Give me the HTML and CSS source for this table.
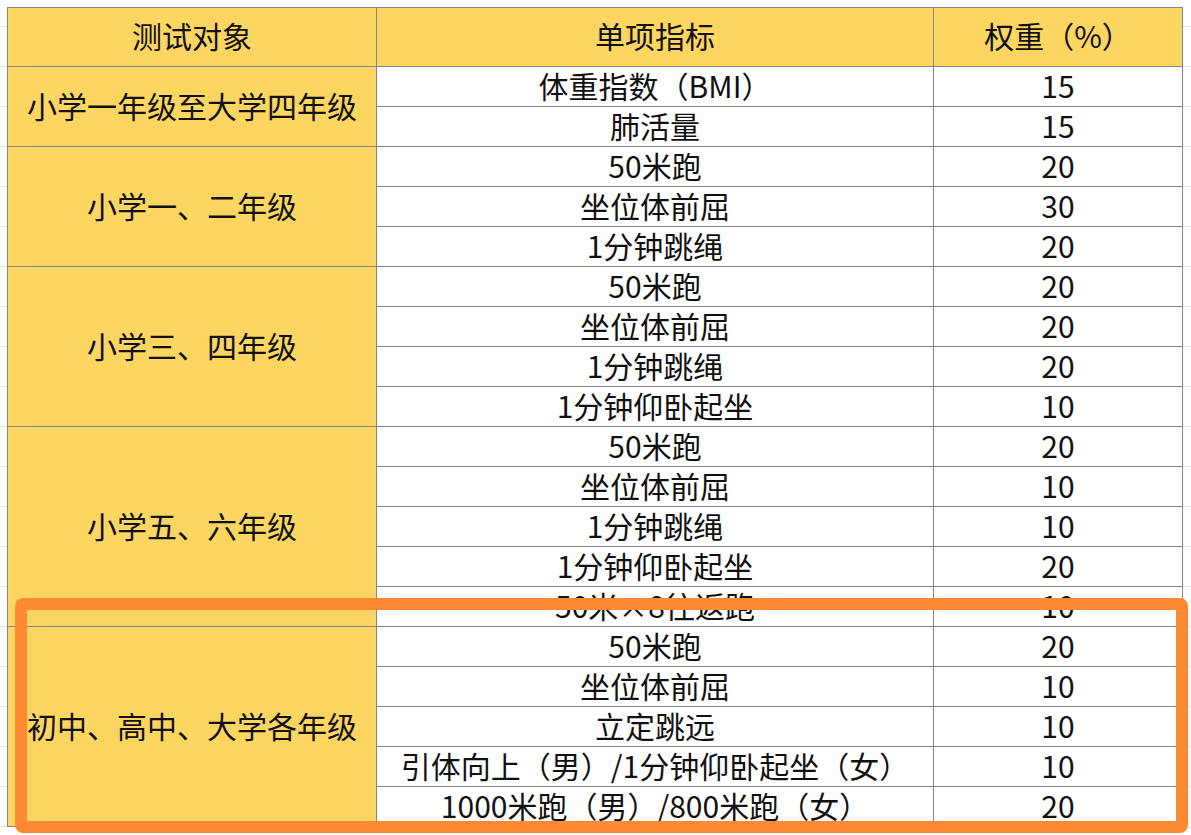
FILE: index.html
```html
<!DOCTYPE html>
<html lang="zh">
<head>
<meta charset="utf-8">
<title>体测指标权重</title>
<link rel="stylesheet" href="styles.css">
</head>
<body>
<div class="sheet">
  <table class="grid">
    <colgroup>
      <col class="c1">
      <col class="c2">
      <col class="c3">
    </colgroup>
    <thead>
      <tr class="head">
        <th>测试对象</th>
        <th>单项指标</th>
        <th>权重（%）</th>
      </tr>
    </thead>
    <tbody>
      <tr><td class="group" rowspan="2">小学一年级至大学四年级</td><td>体重指数（BMI）</td><td>15</td></tr>
      <tr><td>肺活量</td><td>15</td></tr>

      <tr><td class="group" rowspan="3">小学一、二年级</td><td>50米跑</td><td>20</td></tr>
      <tr><td>坐位体前屈</td><td>30</td></tr>
      <tr><td>1分钟跳绳</td><td>20</td></tr>

      <tr><td class="group" rowspan="4">小学三、四年级</td><td>50米跑</td><td>20</td></tr>
      <tr><td>坐位体前屈</td><td>20</td></tr>
      <tr><td>1分钟跳绳</td><td>20</td></tr>
      <tr><td>1分钟仰卧起坐</td><td>10</td></tr>

      <tr><td class="group" rowspan="5">小学五、六年级</td><td>50米跑</td><td>20</td></tr>
      <tr><td>坐位体前屈</td><td>10</td></tr>
      <tr><td>1分钟跳绳</td><td>10</td></tr>
      <tr><td>1分钟仰卧起坐</td><td>20</td></tr>
      <tr><td>50米×8往返跑</td><td>10</td></tr>

      <tr><td class="group" rowspan="5">初中、高中、大学各年级</td><td>50米跑</td><td>20</td></tr>
      <tr><td>坐位体前屈</td><td>10</td></tr>
      <tr><td>立定跳远</td><td>10</td></tr>
      <tr><td>引体向上（男）/1分钟仰卧起坐（女）</td><td>10</td></tr>
      <tr><td>1000米跑（男）/800米跑（女）</td><td>20</td></tr>
    </tbody>
  </table>
  <div class="highlight"></div>
</div>
</body>
</html>
```

FILE: styles.css
```css
html, body {
  margin: 0;
  padding: 0;
}

body {
  width: 1191px;
  height: 835px;
  overflow: hidden;
  background-color: #ffffff;
  background-image: repeating-linear-gradient(
    to bottom,
    transparent 0,
    transparent 26px,
    #e3e3e3 26px,
    #e3e3e3 27px,
    transparent 27px,
    transparent 40px
  );
  font-family: "Noto Sans CJK SC", "Microsoft YaHei", sans-serif;
  color: #111111;
}

.sheet {
  position: relative;
  padding: 7px 0 0 7px;
}

.grid {
  border-collapse: collapse;
  table-layout: fixed;
  width: 1176px;
}

.c1 { width: 369px; }
.c2 { width: 557px; }
.c3 { width: 249px; }

.grid th,
.grid td {
  border: 1px solid #858585;
  padding: 0 0 4px 0;
  text-align: center;
  vertical-align: middle;
  font-size: 30px;
  font-weight: normal;
  line-height: 34px;
  white-space: nowrap;
}

.grid tr {
  height: 40px;
}

.grid tr.head {
  height: 59px;
}

.grid th {
  background: #fcd660;
}

.grid td {
  background: #ffffff;
}

.grid td.group {
  background: #fcd660;
}

.highlight {
  position: absolute;
  left: 15px;
  top: 598px;
  width: 1173px;
  height: 235px;
  box-sizing: border-box;
  border: 12px solid #ff8a33;
  border-radius: 8px;
  pointer-events: none;
}
```
